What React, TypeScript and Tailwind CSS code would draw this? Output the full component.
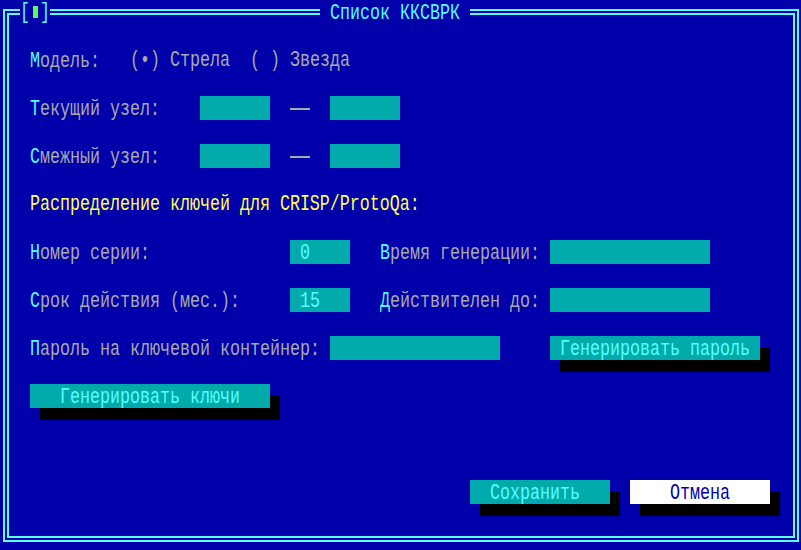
import React from "react";
import clsx from "clsx";

// DOS / Turbo Vision palette
// blue #0000aa, teal #00aaaa, gray #aaaaaa, cyan #55ffff, yellow #ffff55

const Txt: React.FC<{ children: React.ReactNode; className?: string }> = ({ children, className }) => (
    <span
        className={clsx(
            "inline-block h-[24px] leading-[24px] whitespace-pre origin-[0_9px] scale-y-[1.34]",
            className
        )}
    >
        {children}
    </span>
);

const Label: React.FC<{ hot: string; rest: string; className?: string }> = ({ hot, rest, className }) => (
    <div className={clsx("h-[24px] shrink-0", className)}>
        <Txt className="text-[#aaaaaa]">
            <span className="text-[#55ffff]">{hot}</span>
            {rest}
        </Txt>
    </div>
);

const Field: React.FC<{ className?: string; value?: string }> = ({ className, value }) => (
    <div className={clsx("h-[24px] shrink-0 bg-[#00aaaa] pl-[10px]", className)}>
        {value && <Txt className="text-[#55ffff]">{value}</Txt>}
    </div>
);

const Button: React.FC<{ label: string; className?: string; textClass?: string }> = ({ label, className, textClass }) => (
    <div className={clsx("h-[24px] shrink-0 shadow-[10px_12px_0_0_#000000]", className)}>
        <Txt className={textClass}>{label}</Txt>
    </div>
);

const Dash = () => (
    <div className="h-[24px] w-[20px] shrink-0 pt-[12px]">
        <div className="h-[2px] w-full bg-[#aaaaaa]" />
    </div>
);

export default function App() {
    return (
        <div className="relative w-[801px] h-[550px] bg-[#0000aa] overflow-hidden font-['Liberation_Mono','DejaVu_Sans_Mono',monospace] text-[16.667px] pt-[9px] pl-[3px] pr-[2px] pb-[8px]">
            {/* double frame */}
            <div className="h-full border-2 border-[#55ffff] p-[2px]">
                <div className="h-full border-2 border-[#55ffff] pt-[33px] pl-[21px]">
                    <div className="flex flex-col gap-[24px]">
                        {/* Модель */}
                        <div className="flex h-[24px]">
                            <Label hot="М" rest="одель:" className="w-[100px]" />
                            <Txt className="w-[120px] text-[#aaaaaa]">(•) Стрела</Txt>
                            <Txt className="text-[#aaaaaa]">( ) Звезда</Txt>
                        </div>

                        <div className="flex h-[24px]">
                            <Label hot="Т" rest="екущий узел:" className="w-[170px]" />
                            <Field className="w-[70px]" />
                            <div className="w-[20px] shrink-0" />
                            <Dash />
                            <div className="w-[20px] shrink-0" />
                            <Field className="w-[70px]" />
                        </div>

                        <div className="flex h-[24px]">
                            <Label hot="С" rest="межный узел:" className="w-[170px]" />
                            <Field className="w-[70px]" />
                            <div className="w-[20px] shrink-0" />
                            <Dash />
                            <div className="w-[20px] shrink-0" />
                            <Field className="w-[70px]" />
                        </div>

                        <div className="flex h-[24px]">
                            <Txt className="text-[#ffff55]">Распределение ключей для CRISP/ProtoQa:</Txt>
                        </div>

                        <div className="flex h-[24px]">
                            <Label hot="Н" rest="омер серии:" className="w-[260px]" />
                            <Field className="w-[60px]" value="0" />
                            <div className="w-[30px] shrink-0" />
                            <Label hot="В" rest="ремя генерации:" className="w-[170px]" />
                            <Field className="w-[160px]" />
                        </div>

                        <div className="flex h-[24px]">
                            <Label hot="С" rest="рок действия (мес.):" className="w-[260px]" />
                            <Field className="w-[60px]" value="15" />
                            <div className="w-[30px] shrink-0" />
                            <Label hot="Д" rest="ействителен до:" className="w-[170px]" />
                            <Field className="w-[160px]" />
                        </div>

                        <div className="flex h-[24px]">
                            <Label hot="П" rest="ароль на ключевой контейнер:" className="w-[300px]" />
                            <Field className="w-[170px]" />
                            <div className="w-[50px] shrink-0" />
                            <Button
                                label="Генерировать пароль"
                                className="w-[210px] bg-[#00aaaa] pl-[10px]"
                                textClass="text-[#55ffff]"
                            />
                        </div>

                        <div className="flex h-[24px]">
                            <Button
                                label="Генерировать ключи"
                                className="w-[240px] bg-[#00aaaa] pl-[30px]"
                                textClass="text-[#55ffff]"
                            />
                        </div>

                        <div className="flex h-[24px] mt-[48px] pl-[440px] gap-[20px]">
                            <Button
                                label="Сохранить"
                                className="w-[140px] bg-[#00aaaa] pl-[20px]"
                                textClass="text-[#55ffff]"
                            />
                            <Button
                                label="Отмена"
                                className="w-[140px] bg-white pl-[40px]"
                                textClass="text-[#0000aa]"
                            />
                        </div>
                    </div>
                </div>
            </div>

            {/* close box over the top frame line */}
            <div className="absolute left-[20px] top-0 h-[24px] w-[30px] bg-[#0000aa] flex">
                <Txt className="w-[10px] text-[#55ffff]">[</Txt>
                <div className="w-[10px] h-[24px] pt-[6px] pl-[3px]">
                    <div className="w-[5px] h-[12px] bg-[#55ff55]" />
                </div>
                <Txt className="w-[10px] text-[#55ffff]">]</Txt>
            </div>

            {/* window title */}
            <div className="absolute left-[320px] top-0 h-[24px] w-[150px] bg-[#0000aa] pl-[10px]">
                <Txt className="text-[#55ffff]">Список ККСВРК</Txt>
            </div>
        </div>
    );
}
